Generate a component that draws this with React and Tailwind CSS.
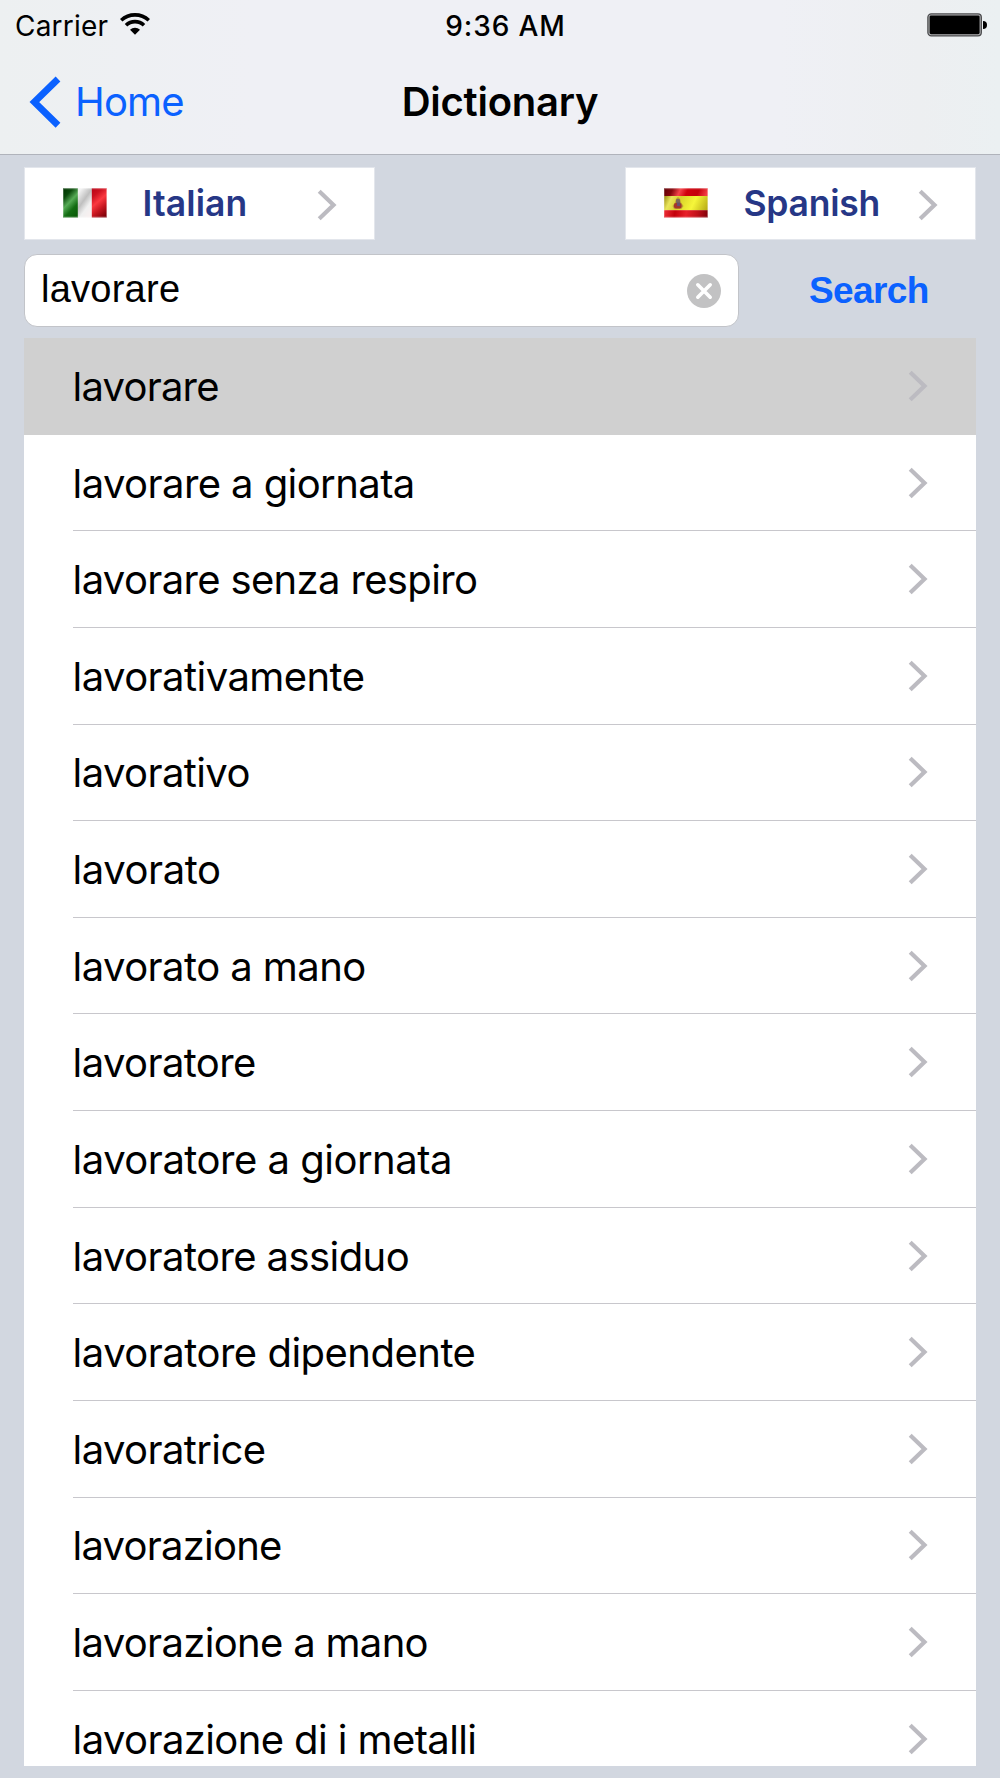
import React from "react";

const rows = [
  { text: "lavorare", tracking: "tracking-[-0.8px]", selected: true },
  { text: "lavorare a giornata", tracking: "tracking-[-0.58px]" },
  { text: "lavorare senza respiro", tracking: "tracking-[-0.65px]" },
  { text: "lavorativamente", tracking: "tracking-[-0.56px]" },
  { text: "lavorativo", tracking: "tracking-[-0.6px]" },
  { text: "lavorato", tracking: "tracking-[-0.45px]" },
  { text: "lavorato a mano", tracking: "tracking-[-0.56px]" },
  { text: "lavoratore", tracking: "tracking-[-0.6px]" },
  { text: "lavoratore a giornata", tracking: "tracking-[-0.5px]" },
  { text: "lavoratore assiduo", tracking: "tracking-[-0.58px]" },
  { text: "lavoratore dipendente", tracking: "tracking-[-0.51px]" },
  { text: "lavoratrice", tracking: "tracking-[-0.6px]" },
  { text: "lavorazione", tracking: "tracking-[-0.77px]" },
  { text: "lavorazione a mano", tracking: "tracking-[-0.68px]" },
  { text: "lavorazione di i metalli", tracking: "tracking-[-0.6px]" },
];

function Chevron() {
  return (
    <svg className="h-[32px] w-[20px] shrink-0" viewBox="0 0 20 32" fill="none">
      <path d="M2.2 2.2 L16.5 16 L2.2 29.8" stroke="#bcbbc1" strokeWidth="4.2" />
    </svg>
  );
}

function WifiIcon() {
  return (
    <svg className="h-[22px] w-[30px]" viewBox="0 0 30 22" fill="none" stroke="#000">
      <path d="M1.2 7.3 A20.2 20.2 0 0 1 28.8 7.3" strokeWidth="3.6" />
      <path d="M6 12.2 A13 13 0 0 1 24 12.2" strokeWidth="3.6" />
      <path d="M10 16.8 A7.2 7.2 0 0 1 20 16.8 L15 21.8 Z" fill="#000" stroke="none" />
    </svg>
  );
}

function BatteryIcon() {
  return (
    <svg className="h-[24px] w-[60px]" viewBox="0 0 60 24">
      <rect x="0.9" y="0.9" width="53.4" height="22" rx="3.4" fill="#b4b5b7" stroke="#4a4a4c" strokeWidth="1.3" />
      <rect x="2.6" y="2.4" width="50" height="18.8" rx="1.4" fill="#000" />
      <path d="M56 8 A4 4 0 0 1 56 16 Z" fill="#000" />
    </svg>
  );
}

function ItalianFlag() {
  return (
    <svg className="h-[30px] w-[44px]" viewBox="0 0 44 30">
      <defs>
        <linearGradient id="itGreen" gradientUnits="userSpaceOnUse" x1="-1" y1="2" x2="19" y2="21">
          <stop offset="0" stopColor="#003300" />
          <stop offset="0.25" stopColor="#0a4a0b" />
          <stop offset="0.5" stopColor="#56ab56" />
          <stop offset="0.75" stopColor="#126c12" />
          <stop offset="1" stopColor="#0a5c08" />
        </linearGradient>
        <linearGradient id="itWhite" gradientUnits="userSpaceOnUse" x1="13" y1="8" x2="31" y2="21">
          <stop offset="0" stopColor="#f2f2f2" />
          <stop offset="0.4" stopColor="#bfbfbf" />
          <stop offset="0.7" stopColor="#f0f0f0" />
          <stop offset="1" stopColor="#f8f0f0" />
        </linearGradient>
        <linearGradient id="itRed" gradientUnits="userSpaceOnUse" x1="25" y1="3" x2="45" y2="26">
          <stop offset="0" stopColor="#b80013" />
          <stop offset="0.25" stopColor="#cc1120" />
          <stop offset="0.48" stopColor="#fb3840" />
          <stop offset="0.72" stopColor="#c5161f" />
          <stop offset="1" stopColor="#7c0008" />
        </linearGradient>
      </defs>
      <rect x="0" y="0.3" width="15" height="29.2" fill="url(#itGreen)" />
      <rect x="14.8" y="0.3" width="14.2" height="29.2" fill="url(#itWhite)" />
      <rect x="28.8" y="0.3" width="15" height="29.2" fill="url(#itRed)" />
      <rect x="0.5" y="0.8" width="43" height="28.2" fill="none" stroke="#fff" strokeOpacity="0.25" />
    </svg>
  );
}

function SpanishFlag() {
  return (
    <svg className="h-[30px] w-[44px]" viewBox="0 0 44 30">
      <defs>
        <linearGradient id="esTop" gradientUnits="userSpaceOnUse" x1="0" y1="0" x2="38" y2="16">
          <stop offset="0" stopColor="#5c0005" />
          <stop offset="0.2" stopColor="#85060c" />
          <stop offset="0.38" stopColor="#f5444a" />
          <stop offset="0.55" stopColor="#d0000c" />
          <stop offset="0.8" stopColor="#c4000b" />
          <stop offset="1" stopColor="#f23a42" />
        </linearGradient>
        <linearGradient id="esMid" gradientUnits="userSpaceOnUse" x1="0" y1="6" x2="42" y2="26">
          <stop offset="0" stopColor="#8f7f08" />
          <stop offset="0.18" stopColor="#e9e55c" />
          <stop offset="0.36" stopColor="#d9d22a" />
          <stop offset="0.66" stopColor="#f6f63a" />
          <stop offset="1" stopColor="#b5a814" />
        </linearGradient>
        <linearGradient id="esBottom" gradientUnits="userSpaceOnUse" x1="0" y1="22" x2="44" y2="30">
          <stop offset="0" stopColor="#ee3038" />
          <stop offset="0.25" stopColor="#c4000b" />
          <stop offset="0.5" stopColor="#e8202a" />
          <stop offset="0.75" stopColor="#c0101a" />
          <stop offset="1" stopColor="#7c0008" />
        </linearGradient>
      </defs>
      <rect x="0" y="0.3" width="43.8" height="8" fill="url(#esTop)" />
      <rect x="0" y="8" width="43.8" height="14.4" fill="url(#esMid)" />
      <rect x="0" y="22.2" width="43.8" height="7.3" fill="url(#esBottom)" />
      <path d="M8.5 18 L11 14.5 L12 11 L14 9 L16 11 L17 14.5 L19.5 18 L17.5 20.8 L10 20.8 Z" fill="#b08a34" opacity="0.75" />
      <rect x="12" y="11" width="4" height="4.5" rx="1.2" fill="#7d6a58" />
      <rect x="10" y="15" width="7.6" height="5.4" rx="2" fill="#a5352a" />
      <rect x="13" y="14.5" width="3.2" height="3.6" fill="#665070" />
      <rect x="0.5" y="0.8" width="43" height="28.2" fill="none" stroke="#fff" strokeOpacity="0.22" />
    </svg>
  );
}

function LanguageButton({ flag, label, tracking }) {
  return (
    <button className="flex h-[73px] w-[351px] items-center border border-[#e3e6ec] bg-white pr-[37.5px] pl-[37.5px] text-left">
      {flag}
      <span className={`mt-[2px] ml-[36px] flex-1 text-[35.5px] leading-none font-semibold text-[#263786] ${tracking}`}>
        {label}
      </span>
      <span className="mt-[3px]">
        <Chevron />
      </span>
    </button>
  );
}

export default function App() {
  return (
    <div className="flex h-[1778px] w-[1000px] flex-col overflow-hidden bg-[#d2d7e0] font-['Inter',sans-serif] text-black">
      <header className="flex h-[155px] shrink-0 flex-col border-b border-[#b0b3bb] bg-[linear-gradient(90deg,#edf0f1_0%,#eff0f5_25%,#eff0f5_78%,#edeff1_92%,#ebf0f2_100%)]">
        <div className="grid h-[50px] grid-cols-3 items-center pr-[13px] pl-[15px]">
          <div className="flex items-center gap-[12px]">
            <span className="mt-[2px] text-[28px] leading-none tracking-[0.2px]">Carrier</span>
            <span className="-mt-[3px]">
              <WifiIcon />
            </span>
          </div>
          <span className="mt-[2px] pl-[9px] text-center text-[28px] leading-none font-medium tracking-[0.9px]">9:36 AM</span>
          <div className="-mt-[1px] flex justify-end">
            <BatteryIcon />
          </div>
        </div>
        <nav className="grid h-[104px] grid-cols-3 items-center pl-[29px]">
          <button className="flex items-center gap-[12px] text-[#0b61ff]">
            <svg className="h-[52px] w-[34px]" viewBox="0 0 34 52" fill="none">
              <path d="M29 3 L5.4 26.1 L29 49.2" stroke="#0b61ff" strokeWidth="6.8" />
            </svg>
            <span className="text-[40px] leading-none tracking-[-0.8px]">Home</span>
          </button>
          <h1 className="-ml-[29px] text-center text-[40px] leading-none font-semibold tracking-[-0.25px]">Dictionary</h1>
        </nav>
      </header>

      <main className="flex flex-1 flex-col px-[24px] pt-[11.5px] pb-[12.5px]">
        <div className="flex justify-between">
          <LanguageButton flag={<ItalianFlag />} label="Italian" tracking="tracking-[0.1px]" />
          <LanguageButton flag={<SpanishFlag />} label="Spanish" tracking="tracking-[-0.25px]" />
        </div>

        <div className="mt-[14px] flex h-[73px] items-center">
          <div className="flex h-[73px] w-[715px] items-center justify-between rounded-[13px] border-[1.5px] border-[#c2c4c9] bg-white pr-[17.5px] pl-[16px]">
            <span className="-mt-[3px] font-['Liberation_Sans',sans-serif] text-[38px] leading-none tracking-[0.25px]">lavorare</span>
            <svg className="mt-[1px] h-[34px] w-[34px]" viewBox="0 0 34 34">
              <circle cx="17" cy="17" r="17" fill="#c2c2c3" />
              <path d="M10.8 10.8 L23.2 23.2 M23.2 10.8 L10.8 23.2" stroke="#fff" strokeWidth="3.6" strokeLinecap="round" />
            </svg>
          </div>
          <button className="ml-[70px] font-['Liberation_Sans',sans-serif] text-[37px] leading-none font-bold tracking-[-0.6px] text-[#0b61ff]">
            Search
          </button>
        </div>

        <ul className="mt-[11.6px] h-[1427.6px] overflow-hidden bg-white">
          {rows.map((row) => (
            <li key={row.text} className={row.selected ? "bg-[#d0d0d0]" : "bg-white"}>
              <div
                className={`ml-[48.6px] flex h-[96.64px] items-center justify-between border-b pr-[48px] ${
                  row.selected ? "border-transparent" : "border-[#c8c7cc]"
                }`}
              >
                <span className={`mt-[2px] text-[40px] leading-none ${row.tracking}`}>{row.text}</span>
                <Chevron />
              </div>
            </li>
          ))}
        </ul>
      </main>
    </div>
  );
}
